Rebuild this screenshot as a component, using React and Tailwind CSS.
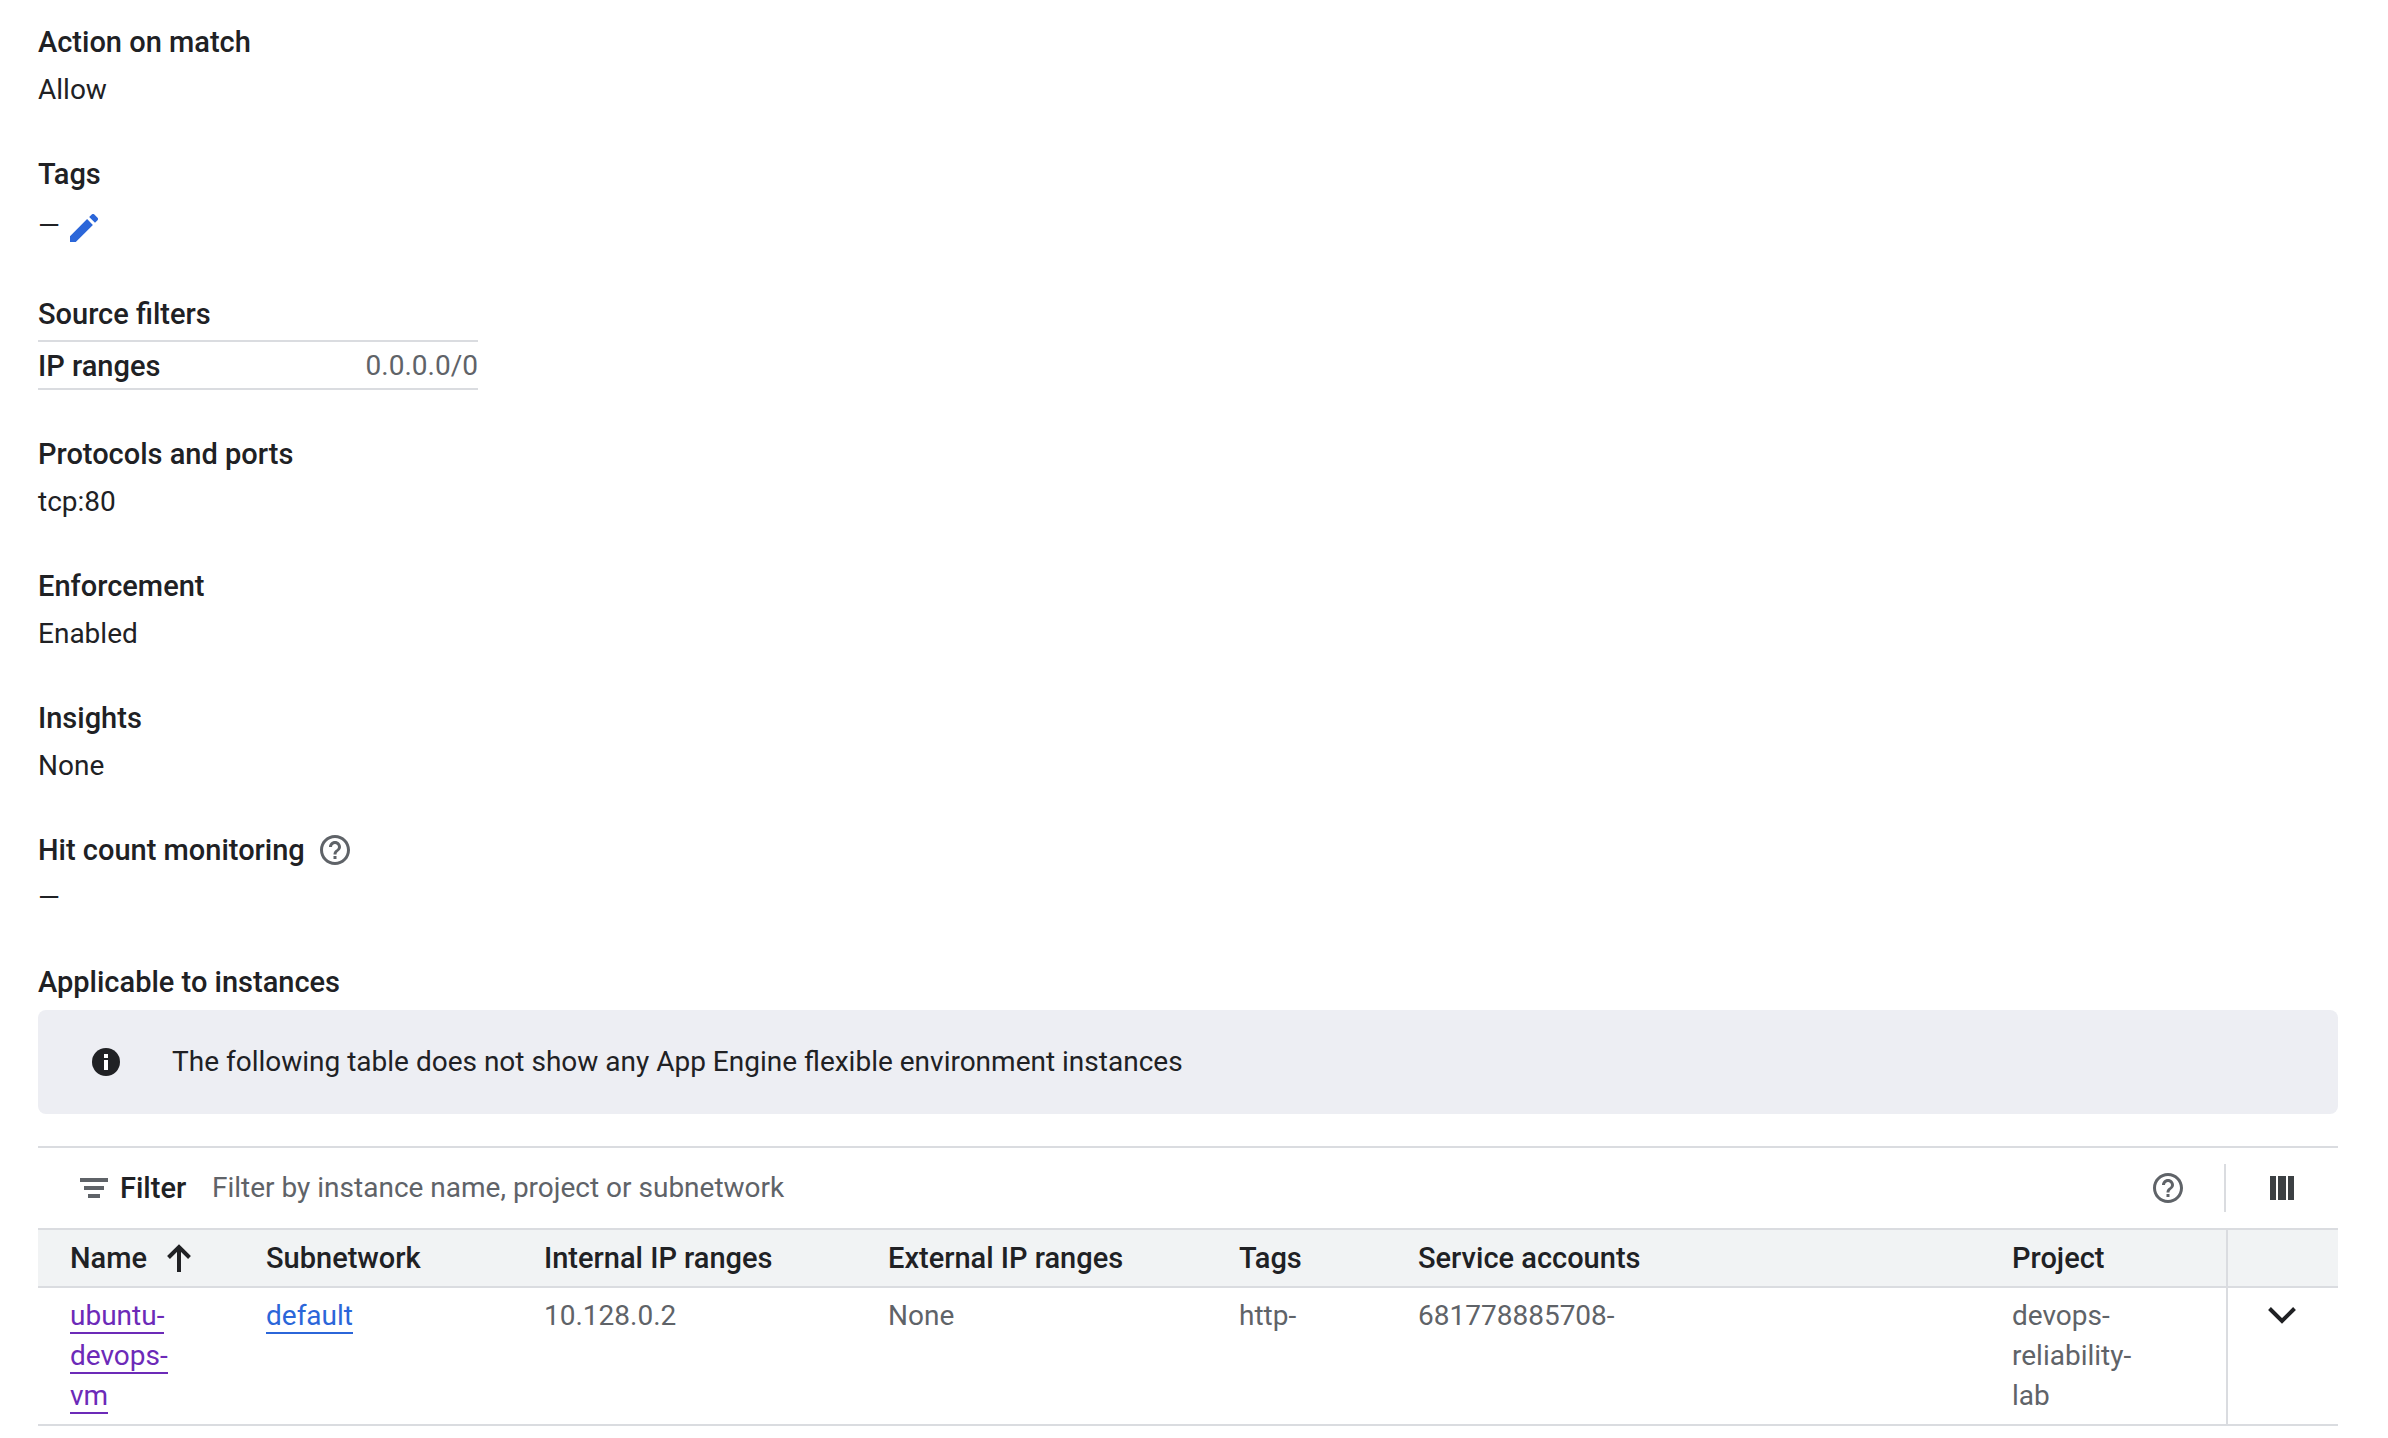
import React from "react";
import { MdHelpOutline } from "react-icons/md";

const heading = "text-[29px] leading-10 font-medium text-[#202124]";

function Field({ label, children, aside }) {
  return (
    <section className="mb-11">
      <div className="flex items-center gap-3">
        <h3 className={heading}>{label}</h3>
        {aside}
      </div>
      <div className="mt-2">{children}</div>
    </section>
  );
}

const columns = [
  { label: "Subnetwork", width: "w-[278px]" },
  { label: "Internal IP ranges", width: "w-[344px]" },
  { label: "External IP ranges", width: "w-[351px]" },
  { label: "Tags", width: "w-[179px]" },
  { label: "Service accounts", width: "" },
  { label: "Project", width: "w-[246px]" },
];

function SortArrow() {
  return (
    <svg viewBox="0 0 24 28" className="h-7 w-6" fill="none" stroke="#202124" strokeWidth="4" aria-hidden="true">
      <path d="M12 28V3M1.5 13.5 12 3l10.5 10.5" />
    </svg>
  );
}

function PencilIcon() {
  return (
    <svg viewBox="0 0 28 28" className="size-7" fill="currentColor" aria-hidden="true">
      <path d="M0 22.2V28h5.8L22.9 10.9 17.1 5.1zM19.2 3l2.3-2.3a2.2 2.2 0 0 1 3.1 0l2.7 2.7a2.2 2.2 0 0 1 0 3.1L25 8.8z" />
    </svg>
  );
}

function InfoIcon() {
  return (
    <svg viewBox="0 0 28 28" className="mr-[52px] size-7" aria-hidden="true">
      <circle cx="14" cy="14" r="14" fill="#202124" />
      <path d="M12 6h4v4h-4zM12 12h4v10h-4z" fill="#fff" />
    </svg>
  );
}

export default function App() {
  return (
    <main className="min-h-screen bg-white pt-[22px] pr-[50px] pl-[38px] font-[Roboto,sans-serif] text-[28px] leading-10 text-[#202124]">
      <Field label="Action on match">Allow</Field>

      <Field label="Tags">
        <div className="flex h-12 items-center gap-2">
          <span>—</span>
          <button type="button" aria-label="Edit tags" className="mt-1 pl-0.5 text-[#2b66d9]">
            <PencilIcon />
          </button>
        </div>
      </Field>

      <section className="mb-11">
        <h3 className={heading}>Source filters</h3>
        <table className="mt-1.5 w-[440px] border-collapse">
          <tbody>
            <tr className="border-y-2 border-[#dadce0]">
              <th scope="row" className="pt-1 pb-0.5 text-left text-[29px] leading-10 font-medium">IP ranges</th>
              <td className="pt-1 pb-0.5 text-right text-[#5f6368]">0.0.0.0/0</td>
            </tr>
          </tbody>
        </table>
      </section>

      <Field label="Protocols and ports">tcp:80</Field>
      <Field label="Enforcement">Enabled</Field>
      <Field label="Insights">None</Field>
      <Field
        label="Hit count monitoring"
        aside={
          <button type="button" aria-label="About hit count monitoring" className="text-[#5f6368]">
            <MdHelpOutline className="size-9" />
          </button>
        }
      >
        —
      </Field>

      <h3 className={heading}>Applicable to instances</h3>
      <div role="note" className="mt-2 flex h-[104px] items-center rounded-lg bg-[#edeef3] pl-[54px]">
        <InfoIcon />
        <p>The following table does not show any App Engine flexible environment instances</p>
      </div>

      <div className="mt-8 border-t-2 border-[#dadce0]">
        <div className="flex h-20 items-center pl-[42px]">
          <svg viewBox="0 0 28 20" className="mr-3 h-5 w-7" fill="#5f6368" aria-hidden="true">
            <path d="M0 0h28v4H0zM4 8h20v4H4zM8 16h12v4H8z" />
          </svg>
          <label htmlFor="instance-filter" className="w-[92px] text-[29px] leading-10 font-medium">Filter</label>
          <input
            id="instance-filter"
            type="text"
            placeholder="Filter by instance name, project or subnetwork"
            className="min-w-0 flex-1 bg-transparent outline-none placeholder:text-[#5f6368]"
          />
          <button type="button" aria-label="Filter help" className="mr-[38px] text-[#5f6368]">
            <MdHelpOutline className="size-9" />
          </button>
          <div className="h-12 border-l-2 border-[#dadce0]" />
          <button type="button" aria-label="Column display options" className="flex w-28 justify-center">
            <svg viewBox="0 0 24 24" className="size-6" fill="#3c4043" aria-hidden="true">
              <path d="M0 0h6v24H0zM8 0h8v24H8zM18 0h6v24h-6z" />
            </svg>
          </button>
        </div>

        <table className="w-full table-fixed border-separate border-spacing-0 text-left">
          <thead className="bg-[#f1f3f4] text-[29px] leading-10">
            <tr className="h-[60px] *:border-y-2 *:border-[#dadce0]">
              <th scope="col" aria-sort="ascending" className="w-[196px] pl-8 font-medium">
                <button type="button" className="flex items-center gap-5">
                  Name
                  <SortArrow />
                </button>
              </th>
              {columns.map((c) => (
                <th key={c.label} scope="col" className={`${c.width} pl-8 font-medium`}>{c.label}</th>
              ))}
              <td className="w-[112px] border-l-2" />
            </tr>
          </thead>
          <tbody>
            <tr className="align-top text-[#5f6368] *:border-b-2 *:border-[#dadce0] *:py-2">
              <td className="pl-8">
                <div className="w-[120px]">
                  <a href="#instance" className="border-b-2 border-[#6c2ab8] text-[#6c2ab8]">ubuntu-devops-vm</a>
                </div>
              </td>
              <td className="pl-8">
                <a href="#subnetwork" className="border-b-2 border-[#2b66d9] text-[#2b66d9]">default</a>
              </td>
              <td className="pl-8">10.128.0.2</td>
              <td className="pl-8">None</td>
              <td className="pl-8">http-</td>
              <td className="pl-8">681778885708-</td>
              <td className="pl-8">
                <div className="w-[140px]">devops-reliability-lab</div>
              </td>
              <td className="border-l-2">
                <button type="button" aria-label="Show details" className="flex h-10 w-full items-center justify-center pr-0.5">
                  <svg viewBox="0 0 28 18" className="h-[18px] w-7" fill="none" stroke="#202124" strokeWidth="4" aria-hidden="true">
                    <path d="M1.5 1.5 14 14 26.5 1.5" />
                  </svg>
                </button>
              </td>
            </tr>
          </tbody>
        </table>
      </div>
    </main>
  );
}
